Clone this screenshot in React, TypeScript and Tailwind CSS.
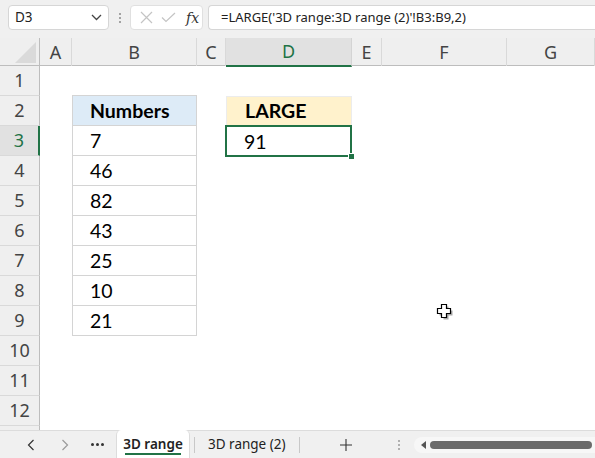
import React from "react";

const cols = ["A", "B", "C", "D", "E", "F", "G"];
const gridCols = "grid grid-cols-[40px_32px_125px_29px_126px_30px_125px_1fr]";

const numbers = ["7", "46", "82", "43", "25", "10", "21"];

function Cursor() {
  return (
    <svg width="18" height="18" viewBox="0 0 18 18" className="absolute left-[436px] top-[303px]">
      <path d="M6 2h5v4h4v5h-4v4H6v-4H2V6h4z" fill="#000" opacity="0.35" transform="translate(1.5,1.5)" />
      <path d="M5.5 1.5h5v4h4v5h-4v4h-5v-4h-4v-5h4z" fill="#fff" stroke="#000" strokeWidth="1.2" />
    </svg>
  );
}

export default function App() {
  const rows = Array.from({ length: 13 }, (_, i) => i + 1);
  return (
    <div className="relative w-[595px] h-[458px] overflow-hidden bg-white flex flex-col font-['Noto_Sans',sans-serif]">
      {/* Top bar */}
      <div className="h-[38px] shrink-0 bg-[#f0f0f0] flex items-start pt-[5px] pl-[8px]">
        <div className="w-[101px] h-[25px] bg-white border border-[#d6d6d6] rounded-[4px] flex items-center justify-between pl-[6px] pr-[6px]">
          <span className="text-[13.5px] text-[#222]">D3</span>
          <svg width="11" height="7" viewBox="0 0 11 7">
            <path d="M1 1l4.5 4.5L10 1" fill="none" stroke="#444" strokeWidth="1.3" />
          </svg>
        </div>
        <div className="w-[21px] h-[25px] flex flex-col items-center justify-center gap-[2px]">
          <div className="w-[2px] h-[2px] bg-[#8a8a8a] rounded-full" />
          <div className="w-[2px] h-[2px] bg-[#8a8a8a] rounded-full" />
          <div className="w-[2px] h-[2px] bg-[#8a8a8a] rounded-full" />
        </div>
        <div className="w-[73px] h-[25px] bg-white border border-[#e0e0e0] rounded-[4px] flex items-center pl-[9px] gap-[8px]">
          <svg width="13" height="13" viewBox="0 0 13 13">
            <path d="M1 1l11 11M12 1L1 12" stroke="#c4c4c4" strokeWidth="1.2" />
          </svg>
          <svg width="15" height="11" viewBox="0 0 15 11">
            <path d="M1 5.5l4 4L14 1" fill="none" stroke="#c4c4c4" strokeWidth="1.2" />
          </svg>
          <span className="font-['DejaVu_Serif',serif] italic text-[14px] text-[#333] leading-none ml-[2px]">fx</span>
        </div>
        <div className="ml-[5px] flex-1 h-[25px] bg-white border border-[#d6d6d6] border-r-0 rounded-l-[4px] flex items-center pl-[12px]">
          <span className="text-[13px] text-[#222] whitespace-nowrap">=LARGE('3D range:3D range (2)'!B3:B9,2)</span>
        </div>
      </div>

      {/* Column headers */}
      <div className={`${gridCols} h-[28px] shrink-0 bg-[#efefef] border-b border-[#bdbdbd]`}>
        <div className="relative border-r border-[#bdbdbd]">
          <svg width="22" height="21" viewBox="0 0 22 21" className="absolute left-[15px] top-[4px]">
            <path d="M21 0V21H0z" fill="#dadada" />
          </svg>
        </div>
        {cols.map((c) => (
          <div
            key={c}
            className={
              c === "D"
                ? "flex items-center justify-center text-[18px] text-[#217346] bg-[#e1e1e1] border-b-2 border-[#217346] border-r border-r-[#d4d4d4] -mb-px"
                : "flex items-center justify-center text-[18px] text-[#444] border-r border-[#d9d9d9]"
            }
          >
            {c}
          </div>
        ))}
      </div>

      {/* Rows */}
      <div className="flex-1 overflow-hidden">
        {rows.map((r) => {
          const isB = r >= 2 && r <= 9;
          return (
            <div key={r} className={`${gridCols} h-[30px]`}>
              <div
                className={
                  r === 3
                    ? "flex items-center justify-center text-[18px] text-[#217346] bg-[#e1e1e1] border-r-2 border-[#217346] border-b border-b-[#d9d9d9]"
                    : "flex items-center justify-center text-[18px] text-[#444] bg-[#efefef] border-r border-[#bdbdbd] border-b border-b-[#d9d9d9]"
                }
              >
                {r}
              </div>
              <div />
              <div
                className={
                  isB
                    ? `flex items-center pl-[17px] text-[19.5px] text-black font-['Lato',sans-serif] border-l border-r border-b border-[#d4d4d4] ${
                        r === 2 ? "bg-[#ddebf7] font-bold border-t" : ""
                      } ${r === 2 ? "-mt-px h-[31px]" : ""}`
                    : ""
                }
              >
                {isB ? (r === 2 ? "Numbers" : numbers[r - 3]) : null}
              </div>
              <div />
              <div className="relative">
                {r === 2 && (
                  <div className="absolute inset-0 bg-[#fff2cc] border border-[#ececec] flex items-center pl-[18px] text-[19.5px] font-bold font-['Lato',sans-serif] text-black">
                    LARGE
                  </div>
                )}
                {r === 3 && (
                  <div className="absolute left-[-1px] top-[-1px] right-0 bottom-[-1px] border-2 border-[#217346] flex items-center pl-[17px] text-[19.5px] font-['Lato',sans-serif] text-black">
                    91
                    <div className="absolute right-[-5px] bottom-[-5px] w-[7px] h-[7px] bg-[#217346] border border-white" />
                  </div>
                )}
              </div>
              <div />
              <div />
              <div />
            </div>
          );
        })}
      </div>

      {/* Tab bar */}
      <div className="h-[28px] shrink-0 bg-[#f0f0f0] border-t border-[#dcdcdc] flex items-stretch relative">
        <div className="w-[116px] shrink-0 flex items-center">
          <svg width="8" height="12" viewBox="0 0 8 12" className="ml-[27px] shrink-0">
            <path d="M6.5 1L1.5 6l5 5" fill="none" stroke="#333" strokeWidth="1.2" />
          </svg>
          <svg width="8" height="12" viewBox="0 0 8 12" className="ml-[26px] shrink-0">
            <path d="M1.5 1l5 5-5 5" fill="none" stroke="#9a9a9a" strokeWidth="1.2" />
          </svg>
          <div className="ml-[22px] flex gap-[2px]">
            <div className="w-[3px] h-[3px] bg-[#333] rounded-full" />
            <div className="w-[3px] h-[3px] bg-[#333] rounded-full" />
            <div className="w-[3px] h-[3px] bg-[#333] rounded-full" />
          </div>
        </div>
        <div className="w-[74px] shrink-0 bg-white rounded-t-[5px] border-x border-[#dcdcdc] -mt-px flex flex-col items-center justify-center relative">
          <span className="text-[13.5px] font-semibold text-[#222] leading-none mt-[1px] whitespace-nowrap">3D range</span>
          <div className="absolute left-[8px] right-[8px] bottom-[3px] h-[2px] bg-[#217346]" />
        </div>
        <div className="flex items-center shrink-0">
          <div className="ml-[4px] w-px h-[16px] bg-[#c8c8c8]" />
          <span className="ml-[13px] text-[13.5px] text-[#222] whitespace-nowrap">3D range (2)</span>
          <div className="ml-[13px] w-px h-[16px] bg-[#c8c8c8]" />
          <svg width="12" height="12" viewBox="0 0 12 12" className="ml-[40px] shrink-0">
            <path d="M6 0v12M0 6h12" stroke="#333" strokeWidth="1.1" />
          </svg>
          <div className="ml-[46px] flex flex-col gap-[2px]">
            <div className="w-[2px] h-[2px] bg-[#b0b0b0]" />
            <div className="w-[2px] h-[2px] bg-[#b0b0b0]" />
            <div className="w-[2px] h-[2px] bg-[#b0b0b0]" />
          </div>
          <div className="ml-[14px] w-[182px] h-[16px] bg-[#f7f7f7] rounded-l-full flex items-center pl-[7px]">
            <svg width="5" height="8" viewBox="0 0 5 8">
              <path d="M5 0v8L0 4z" fill="#555" />
            </svg>
            <div className="ml-[4px] w-[162px] h-[8px] rounded-full bg-[#6b6b6b]" />
          </div>
        </div>
      </div>

      <Cursor />
    </div>
  );
}
